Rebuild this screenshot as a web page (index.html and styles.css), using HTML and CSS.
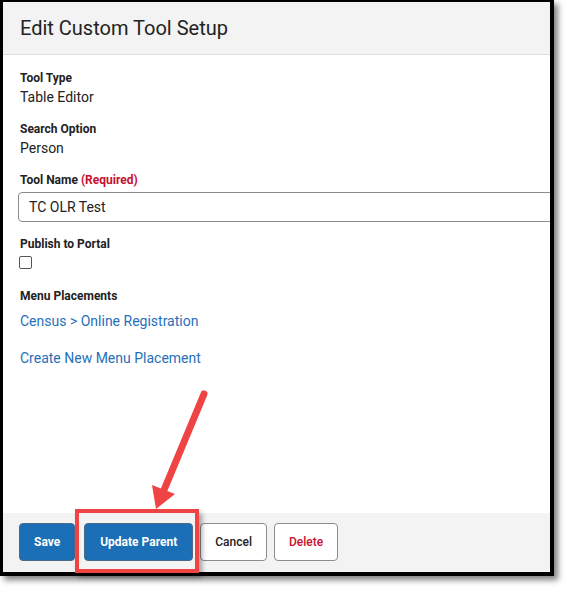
FILE: index.html
```html
<!DOCTYPE html>
<html>
<head>
<meta charset="utf-8">
<link rel="stylesheet" href="styles.css">
</head>
<body>
<div class="frame">
  <div class="header"><h1 class="title">Edit Custom Tool Setup</h1></div>
  <div class="content">
    <div class="label">Tool Type</div>
    <div class="value">Table Editor</div>
    <div class="label gap">Search Option</div>
    <div class="value">Person</div>
    <div class="label gap">Tool Name <span class="req">(Required)</span></div>
    <input class="text-input" type="text" value="TC OLR Test">
    <div class="label gap">Publish to Portal</div>
    <div class="check"></div>
    <div class="label gap2">Menu Placements</div>
    <a class="link first">Census &gt; Online Registration</a>
    <a class="link second">Create New Menu Placement</a>
  </div>
  <div class="footer">
    <button class="btn primary save">Save</button>
    <button class="btn primary">Update Parent</button>
    <button class="btn secondary">Cancel</button>
    <button class="btn secondary danger">Delete</button>
  </div>
</div>
<div class="highlight"></div>
<svg class="arrow" width="569" height="591" viewBox="0 0 569 591">
  <line x1="204" y1="394" x2="164" y2="490" stroke="#f04444" stroke-width="7" stroke-linecap="round"/>
  <polygon points="156,509 152,485 175,494" fill="#f04444"/>
</svg>
</body>
</html>
```
FILE: styles.css
```css
html, body {
  margin: 0;
  padding: 0;
  background: #fff;
}
body {
  font-family: Roboto, "Liberation Sans", sans-serif;
  color: #222;
  width: 569px;
  height: 591px;
  position: relative;
  overflow: hidden;
}
.frame {
  width: 547px;
  height: 570px;
  border-style: solid;
  border-color: #000;
  border-width: 2px 4px 4px 3px;
  box-shadow: 4px 4px 6px rgba(0,0,0,0.5);
  display: flex;
  flex-direction: column;
  overflow: hidden;
  background: #fff;
}
.header {
  height: 52px;
  background: #f3f3f3;
  border-bottom: 1px solid #dedede;
  display: flex;
  align-items: center;
  padding-left: 17px;
  flex-shrink: 0;
}
.title {
  margin: 0;
  font-size: 20px;
  font-weight: 400;
  color: #222;
}
.content {
  flex: 1;
  padding: 14px 0 0 17px;
  display: flex;
  flex-direction: column;
  align-items: flex-start;
}
.label {
  font-size: 12px;
  font-weight: 700;
  line-height: 18px;
  color: #222;
}
.label.gap { margin-top: 13px; }
.label.gap2 { margin-top: 18px; }
.req { color: #c8102e; }
.value {
  font-size: 14px;
  line-height: 20px;
  color: #222;
}
.text-input {
  box-sizing: border-box;
  margin: 3px 0 0 -2px;
  width: 560px;
  height: 30px;
  border: 1px solid #8c8c8c;
  border-radius: 4px;
  padding: 0 10px;
  font-family: Roboto, "Liberation Sans", sans-serif;
  font-size: 14px;
  color: #222;
  background: #fff;
  outline: none;
}
.check {
  width: 11px;
  height: 11px;
  border: 1px solid #555;
  border-radius: 2px;
  margin: 3px 0 0 -1px;
  background: #fff;
}
.link {
  font-size: 14px;
  line-height: 20px;
  color: #2770b8;
  text-decoration: none;
}
.link.first { margin-top: 6px; }
.link.second { margin-top: 17px; }
.footer {
  height: 59px;
  background: #f3f3f3;
  display: flex;
  align-items: center;
  gap: 7px;
  padding-left: 16px;
  padding-bottom: 2px;
  box-sizing: border-box;
  flex-shrink: 0;
}
.btn {
  height: 38px;
  padding: 0 15px;
  border-radius: 4px;
  font-family: Roboto, "Liberation Sans", sans-serif;
  font-size: 12px;
  cursor: pointer;
}
.btn.primary {
  background: #1b6fb6;
  border: 1px solid #4b6a86;
  color: #fff;
  font-weight: 700;
}
.btn.save { margin-right: 2px; padding: 0 14px; }
.btn.secondary {
  background: #fff;
  border: 1px solid #8c8c8c;
  color: #222;
  font-weight: 500;
  padding: 0 14px;
}
.btn.danger { color: #c8102e; }
.highlight {
  position: absolute;
  left: 75px;
  top: 509px;
  width: 116px;
  height: 56px;
  border: 4px solid #f04444;
  box-shadow: 3px 4px 5px rgba(0,0,0,0.35);
}
.arrow {
  position: absolute;
  left: 0;
  top: 0;
  pointer-events: none;
}
```
